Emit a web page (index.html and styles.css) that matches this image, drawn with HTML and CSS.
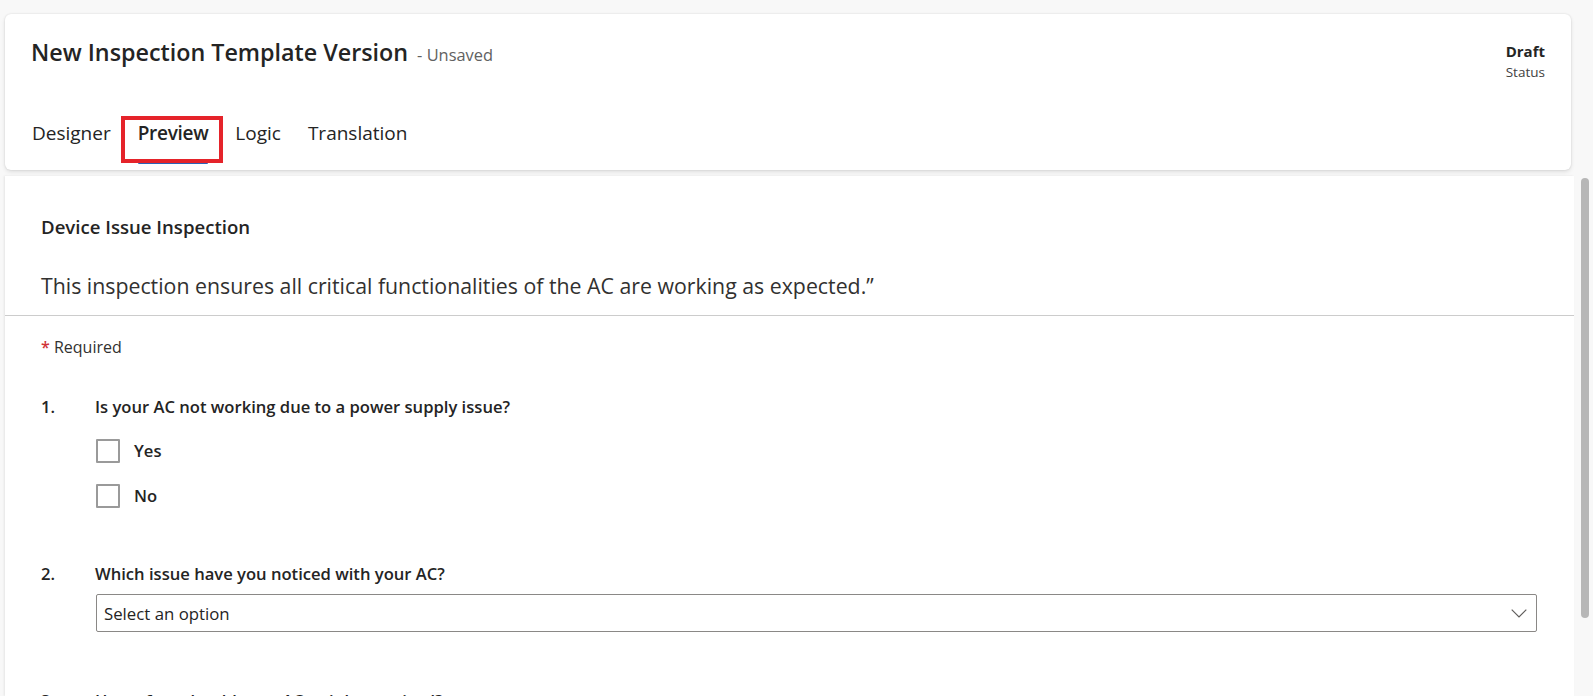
FILE: index.html
```html
<!DOCTYPE html>
<html lang="en">
<head>
<meta charset="utf-8">
<title>New Inspection Template Version</title>
<link rel="stylesheet" href="styles.css">
</head>
<body>
<div class="page">
  <header class="head-card">
    <div class="title-row">
      <div class="title-wrap">
        <h1 class="title">New Inspection Template Version</h1>
        <span class="unsaved">- Unsaved</span>
      </div>
      <div class="status">
        <div class="status-value">Draft</div>
        <div class="status-label">Status</div>
      </div>
    </div>
    <nav class="tabs">
      <div class="tab"><span class="tab-label">Designer</span><span class="tab-bar"></span></div>
      <div class="tab active"><span class="tab-label">Preview</span><span class="tab-bar"></span></div>
      <div class="tab"><span class="tab-label">Logic</span><span class="tab-bar"></span></div>
      <div class="tab"><span class="tab-label">Translation</span><span class="tab-bar"></span></div>
    </nav>
    <div class="highlight"></div>
  </header>

  <div class="main-row">
    <main class="content">
      <section class="intro">
        <h2 class="form-title">Device Issue Inspection</h2>
        <p class="form-desc">This inspection ensures all critical functionalities of the AC are working as expected.”</p>
      </section>
      <section class="questions">
        <div class="required"><span class="star">*</span> Required</div>

        <div class="question q1">
          <div class="q-head"><span class="q-num">1.</span><span class="q-text">Is your AC not working due to a power supply issue?</span></div>
          <div class="q-body">
            <label class="option"><span class="box"></span><span class="opt-label">Yes</span></label>
            <label class="option"><span class="box"></span><span class="opt-label">No</span></label>
          </div>
        </div>

        <div class="question q2">
          <div class="q-head"><span class="q-num">2.</span><span class="q-text">Which issue have you noticed with your AC?</span></div>
          <div class="q-body">
            <div class="select">
              <span class="select-text">Select an option</span>
              <svg class="chev" width="16" height="9" viewBox="0 0 16 9"><path d="M0.7 0.7 L8 8 L15.3 0.7" fill="none" stroke="#605e5c" stroke-width="1.2"/></svg>
            </div>
          </div>
        </div>

        <div class="question q3">
          <div class="q-head"><span class="q-num">3.</span><span class="q-text">How often should your AC unit be serviced?</span></div>
        </div>
      </section>
    </main>
    <div class="scroll-track"><div class="scroll-thumb"></div></div>
  </div>
</div>
</body>
</html>
```

FILE: styles.css
```css
* { box-sizing: border-box; }
html, body { margin: 0; padding: 0; height: 100%; }
body {
  background: #f8f8f8;
  font-family: "Open Sans", "Noto Sans", "Liberation Sans", sans-serif;
  color: #242424;
  overflow: hidden;
}
.page { display: flex; flex-direction: column; height: 696px; }

.head-card {
  position: relative;
  margin: 14px 22px 0 5px;
  height: 156px;
  background: #fff;
  border-radius: 6px;
  box-shadow: 0 0 2px rgba(0,0,0,0.12), 0 2px 4px rgba(0,0,0,0.10);
  padding: 22px 26px 0 26px;
  display: flex;
  flex-direction: column;
}
.title-row { display: flex; justify-content: space-between; align-items: flex-start; height: 46px; }
.title-wrap { display: flex; align-items: baseline; }
.title { margin: 0; font-size: 23.3px; line-height: 32px; font-weight: 600; color: #242424; }
.unsaved { margin-left: 9px; font-size: 16.4px; color: #616161; }
.status { padding-top: 4px; }
.status-value { font-size: 15px; line-height: 22px; font-weight: 700; color: #242424; }
.status-label { font-size: 13.5px; line-height: 20px; color: #424242; }

.tabs { display: flex; gap: 27px; margin-top: 31px; padding-left: 1px; }
.tab { display: flex; flex-direction: column; align-items: stretch; padding-top: 8px; }
.tab-label { font-size: 19px; line-height: 24px; color: #242424; }
.tab.active .tab-label { font-weight: 600; letter-spacing: -0.3px; }
.tab-bar { height: 2px; margin-top: 17px; border-radius: 1px; }
.tab.active .tab-bar { background: #2b63b8; }

.highlight {
  position: absolute;
  left: 116px; top: 102px;
  width: 102px; height: 47px;
  border: 4px solid #e5232a;
}

.main-row { display: flex; flex: 1; margin-top: 6px; min-height: 0; }
.content {
  flex: 1;
  margin-left: 5px;
  background: #fff;
  box-shadow: -1px 0 2px rgba(0,0,0,0.08);
  overflow: hidden;
}
.scroll-track { width: 19px; display: flex; justify-content: center; padding: 2px 0 0 3px; }
.scroll-thumb { width: 8px; height: 440px; background: #b7b7b7; border-radius: 4px; }

.intro { padding: 39px 36px 15px; border-bottom: 1px solid #cccccc; }
.form-title { margin: 0; font-size: 18.6px; line-height: 24px; font-weight: 600; color: #242424; }
.form-desc { margin: 33px 0 0; font-size: 21.3px; line-height: 28px; color: #323130; }

.questions { padding: 21px 37px 0 36px; }
.required { font-size: 16px; line-height: 20px; color: #323130; }
.star { color: #d13438; font-weight: 600; }

.question { display: flex; flex-direction: column; }
.q1 { margin-top: 39px; }
.q2 { margin-top: 55px; }
.q3 { margin-top: 58px; }
.q-head { display: flex; }
.q-num { width: 54px; font-size: 16.6px; line-height: 22px; font-weight: 600; color: #242424; }
.q-text { font-size: 16.6px; line-height: 22px; font-weight: 600; color: #242424; }
.q-body { padding-left: 55px; display: flex; flex-direction: column; }
.q1 .q-body { gap: 21px; margin-top: 21px; }
.option { display: flex; align-items: center; }
.box { width: 24px; height: 24px; border: 2px solid #9a9a9a; border-radius: 1px; background: #fff; }
.opt-label { margin-left: 14px; font-size: 16.6px; line-height: 22px; font-weight: 600; color: #242424; }

.q2 .q-body { margin-top: 9px; }
.select {
  height: 38px;
  border: 1px solid #8a8886;
  border-radius: 2px;
  display: flex;
  align-items: center;
  justify-content: space-between;
  padding: 0 9px 0 7px;
}
.select-text { font-size: 16.8px; color: #242424; }
.chev { display: block; }
```
